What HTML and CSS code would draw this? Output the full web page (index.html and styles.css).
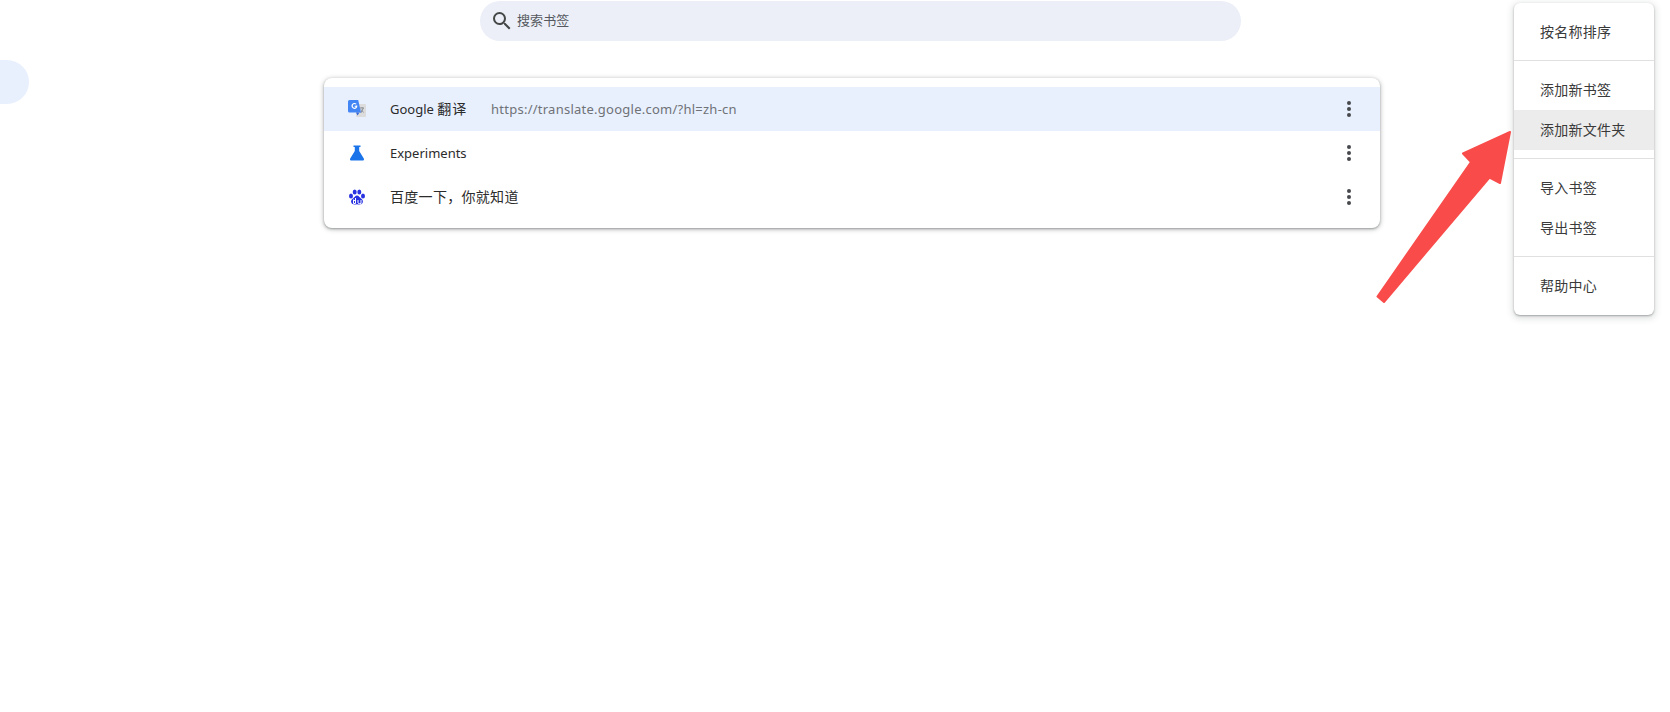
FILE: index.html
```html
<!DOCTYPE html>
<html lang="zh-CN">
<head>
<meta charset="utf-8">
<title>书签</title>
<link rel="stylesheet" href="styles.css">
</head>
<body>
<header class="toolbar">
  <div class="search">
    <svg class="search-icon" viewBox="0 0 24 24" width="24" height="24"><path d="M15.500 14h-.79l-.28-.27A6.470 6.470 0 0 0 16 9.500 6.500 6.500 0 1 0 9.500 16c1.610 0 3.090-.59 4.230-1.570l.27.28v.79l5 4.990L20.490 19l-4.990-5zm-6 0C7.010 14 5 11.990 5 9.500S7.010 5 9.500 5 14 7.010 14 9.500 11.990 14 9.500 14z"/></svg>
    <span class="search-text">搜索书签</span>
  </div>
</header>
<main class="content">
  <nav class="sidebar"><div class="nav-pill"></div></nav>
  <section class="card">
    <div class="row row-active">
      <svg class="favicon" viewBox="0 0 18 18" width="18" height="18">
        <rect x="8" y="4" width="10" height="13" rx="1" fill="#dcdcdc"/>
        <path d="M12 8h4M14 7v1M12.800 13l2.600-5M13 9.500l2.600 3" stroke="#8a8f98" stroke-width="1" fill="none"/>
        <path d="M1.500 0h8.700L13 12.500H1.500A1.500 1.500 0 0 1 0 11V1.500A1.500 1.500 0 0 1 1.500 0z" fill="#4285f4"/>
        <path d="M8 12.500h3.500L9.500 15.500z" fill="#3367d6"/>
        <path d="M8.600 5.600v1.100H6.700v1h1.100c-.2.700-.8 1-1.300 1a1.800 1.800 0 0 1 0-3.600c.5 0 .9.200 1.200.400l.8-.8a3 3 0 1 0-2 5.200c1.700 0 2.800-1.200 2.800-2.900 0-.2 0-.3-.1-.4z" fill="#fff" transform="translate(0 -1)"/>
      </svg>
      <span class="row-title">Google <span class="cjk cjk-wide">翻译</span></span>
      <span class="row-url">https://translate.google.com/?hl=zh-cn</span>
      <span class="dots"><i></i><i></i><i></i></span>
    </div>
    <div class="row">
      <svg class="favicon" viewBox="0 0 18 18" width="18" height="18">
        <path d="M5.500 1.500h7v1.500h-1.300v4l4.600 7.400c.6 1-.1 2.100-1.200 2.100H3.400c-1.100 0-1.800-1.100-1.200-2.100L6.800 7V3H5.500z" fill="#1a73e8"/>
      </svg>
      <span class="row-title">Experiments</span>
      <span class="dots"><i></i><i></i><i></i></span>
    </div>
    <div class="row">
      <svg class="favicon" viewBox="0 0 18 18" width="18" height="18">
        <g fill="#2932e1">
          <ellipse cx="3" cy="8" rx="2" ry="2.500"/>
          <ellipse cx="6.700" cy="4" rx="2" ry="2.600"/>
          <ellipse cx="11.300" cy="4" rx="2" ry="2.600"/>
          <ellipse cx="15" cy="8" rx="2" ry="2.500"/>
          <path d="M9 7.500c-2 0-2.500 2-4 3-1.500 1-2.200 2.200-1.800 3.800.4 1.600 1.800 2.200 3.300 2.200 1 0 1.600-.3 2.500-.3s1.500.3 2.500.3c1.500 0 2.900-.6 3.300-2.200.4-1.600-.3-2.800-1.800-3.800-1.500-1-2-3-4-3z"/>
        </g>
        <path d="M5.500 11.500v4h2M7.500 10v5.500M5.500 12.500h2M10 12v3c0 .5.800.6 1.300.6H13V12" fill="none" stroke="#fff" stroke-width="1"/>
      </svg>
      <span class="row-title cjk">百度一下，你就知道</span>
      <span class="dots"><i></i><i></i><i></i></span>
    </div>
  </section>
</main>
<div class="menu">
  <div class="menu-item">按名称排序</div>
  <hr class="sep">
  <div class="menu-item">添加新书签</div>
  <div class="menu-item menu-hover">添加新文件夹</div>
  <hr class="sep">
  <div class="menu-item">导入书签</div>
  <div class="menu-item">导出书签</div>
  <hr class="sep">
  <div class="menu-item">帮助中心</div>
</div>
<svg class="arrow" viewBox="0 0 1670 712" width="1670" height="712">
  <path d="M1510 132 L1463 153.500 L1471 162 L1377.500 296.500 L1384 302 L1489.500 177.500 L1500 183 Z" fill="#f94c4a" stroke="#f94c4a" stroke-width="2" stroke-linejoin="round"/>
</svg>
</body>
</html>
```
FILE: styles.css
```css
* { box-sizing: border-box; }
html, body { margin: 0; height: 712px; overflow: hidden; background: #fff; }
body { font-family: "Noto Sans", "Noto Sans CJK SC", sans-serif; font-size: 13px; color: #2b2b2b; position: relative; }
.toolbar { height: 41px; padding: 1px 0 0 480px; }
.search { width: 761px; height: 40px; border-radius: 20px; background: #eceff8; display: flex; align-items: center; padding-left: 10px; }
.search-icon { fill: #444746; flex: none; }
.search-text { margin-left: 3px; color: #55585e; font-size: 13px; letter-spacing: .1px; line-height: 38px; height: 40px; }
.content { display: flex; }
.sidebar { width: 324px; padding-top: 19px; }
.nav-pill { width: 29px; height: 44px; background: #e8f0fe; border-radius: 0 22px 22px 0; }
.card { width: 1056px; height: 150px; margin-top: 37px; padding: 9px 0; background: #fff; border-radius: 8px; box-shadow: 0 1px 2px rgba(60,64,67,.35), 0 1px 4px 1px rgba(60,64,67,.28); }
.row { height: 44px; display: flex; align-items: center; padding-left: 24px; position: relative; }
.row-active { background: #e8f0fe; }
.favicon { flex: none; }
.row-title { margin-left: 24px; line-height: 20px; }
.row-active .row-title { width: 101px; flex: none; }
.cjk { font-size: 14px; letter-spacing: .3px; }
.cjk-wide { letter-spacing: .9px; }
.row-title.cjk { margin-top: -1px; }
.row-url { color: #6f7276; line-height: 20px; letter-spacing: .25px; }
.dots { margin-left: auto; margin-right: 29px; display: flex; flex-direction: column; gap: 2px; width: 4px; }
.dots i { display: block; width: 4px; height: 4px; border-radius: 50%; background: #46484c; }
.menu { position: absolute; left: 1514px; top: 3px; width: 140px; height: 312px; padding-top: 9px; background: #fff; border-radius: 6px; box-shadow: 0 1px 2px rgba(60,64,67,.4), 0 2px 6px 2px rgba(60,64,67,.15); }
.menu-item { height: 40px; line-height: 40px; padding-left: 26px; font-size: 14px; color: #3a3a3a; letter-spacing: .25px; }
.menu-hover { background: #ececec; }
.sep { border: 0; height: 1px; margin: 8px 0 9px; background: #e0e0e0; }
.arrow { position: absolute; left: 0; top: 0; pointer-events: none; }
```
